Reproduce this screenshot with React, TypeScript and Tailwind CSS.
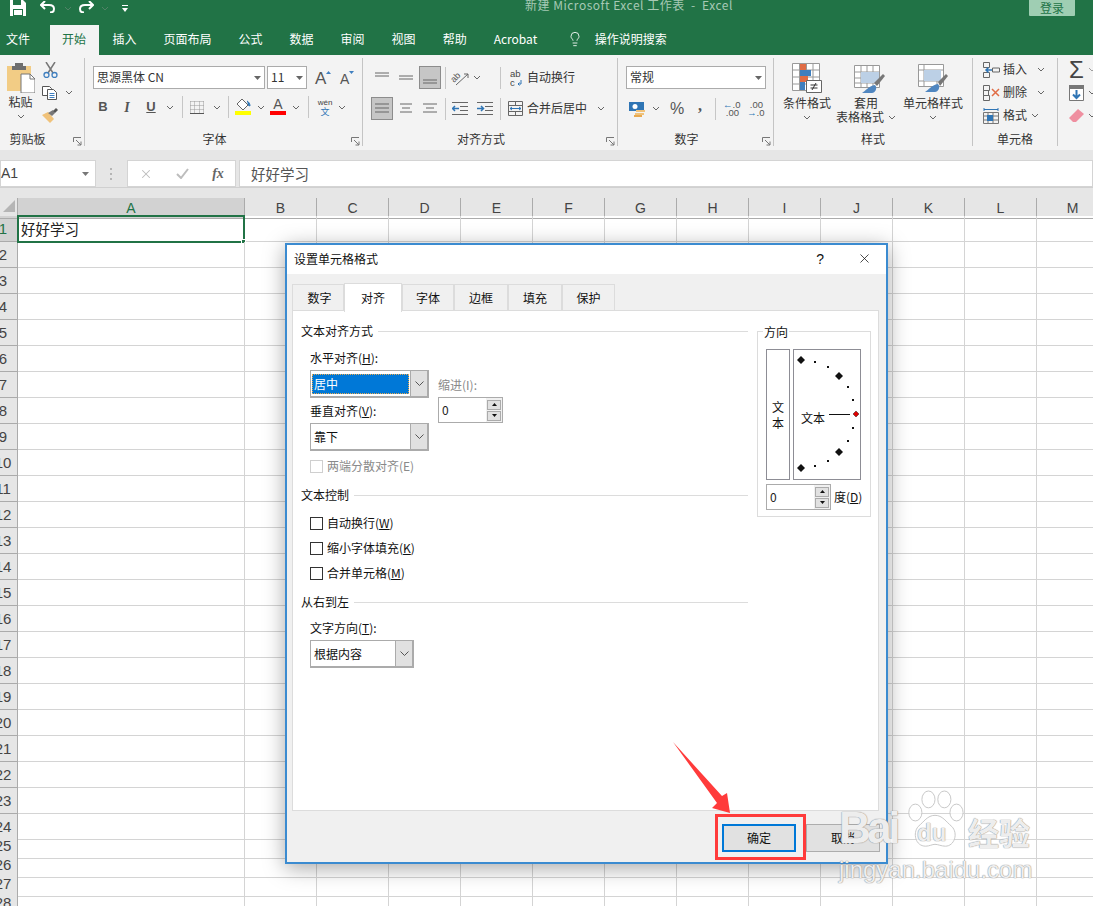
import { Lightbulb, X } from "lucide-react";
import type { ReactNode } from "react";

const COLS = ["B", "C", "D", "E", "F", "G", "H", "I", "J", "K", "L", "M"];
const ROWS = Array.from({ length: 28 }, (_, i) => i + 1);

function Chev({ className = "" }: { className?: string }) {
  return (
    <svg width="8" height="5" viewBox="0 0 8 5" className={`shrink-0 ${className}`}>
      <path d="M1 1l3 3 3-3" fill="none" stroke="#666" strokeWidth="1" />
    </svg>
  );
}

function Launcher() {
  return (
    <svg width="9" height="9" viewBox="0 0 9 9">
      <path d="M.5 5V.5H8M3 3l5 5M8 4.500V8H4.500" fill="none" stroke="#777" strokeWidth="1" />
    </svg>
  );
}

function Sep({ className = "" }: { className?: string }) {
  return <div className={`h-[22px] w-px shrink-0 bg-[#c6c6c6] ${className}`} />;
}

function Group({ w, label, launcher, children }: { w: string; label: string; launcher?: string; children: ReactNode }) {
  return (
    <div className={`flex h-[88px] shrink-0 flex-col border-r border-[#c4c4c4] ${w}`}>
      <div className="h-[73px]">{children}</div>
      <div className="flex h-[15px] items-center text-[12px] leading-[15px] text-[#333]">
        <span className="flex-1 text-center">{label}</span>
        {launcher && (
          <span className={`flex justify-end pr-[2px] pt-[5px] ${launcher}`}>
            <Launcher />
          </span>
        )}
      </div>
    </div>
  );
}

function Lines({ rows }: { rows: [number, number][] }) {
  return (
    <svg width="16" height="14" viewBox="0 0 16 14">
      {rows.map(([x, y], i) => (
        <path key={i} d={`M${x} ${y}h${16 - 2 * x}`} stroke="#666" strokeWidth="1" />
      ))}
    </svg>
  );
}

function AlignBox({ selected, children }: { selected?: boolean; children: ReactNode }) {
  return (
    <div className="flex h-[23px] w-[24px] items-center justify-center">
      <div className={`flex h-[23px] w-[22px] items-center justify-center ${selected ? "border border-[#8c8c8c] bg-[#c6c6c6]" : ""}`}>{children}</div>
    </div>
  );
}

function Combo({ w, text }: { w: string; text: string }) {
  return (
    <div className={`flex h-[23px] items-center justify-between border border-[#ababab] bg-white pl-[3px] pr-[3px] text-[12px] text-[#333] ${w}`}>
      <span className="-mt-[2px]">{text}</span>
      <svg width="7" height="4" viewBox="0 0 7 4"><path d="M0 0h7L3.500 4z" fill="#666" /></svg>
    </div>
  );
}

function Ribbon() {
  return (
    <div className="flex h-[95px] bg-[#f3f3f3] pt-[3px]">
      <Group w="w-[85px]" label="剪贴板" launcher="w-[29px]">
        <div className="flex">
          <div className="flex w-[41px] flex-col items-center pt-[5px]">
            <svg width="28" height="30" viewBox="0 0 28 30" className="ml-[1px]">
              <path d="M0 3h24v25H0z" fill="#f2cc85" />
              <path d="M8 3V0h8v3h3v4H5V3z" fill="#6e6e6e" />
              <path d="M14 11h9l5 5v14H14z" fill="#fff" stroke="#777" />
              <path d="M23 11v5h5" fill="none" stroke="#777" />
            </svg>
            <span className="mt-[2px] text-[12px] leading-[14px] text-[#333]">粘贴</span>
            <Chev className="mt-[5px]" />
          </div>
          <div className="flex flex-col">
            <div className="flex h-[23px] items-center pl-[2px]">
              <svg width="15" height="16" viewBox="0 0 15 16">
                <path d="M3 0l7 11M12 0L5 11" stroke="#777" strokeWidth="1.500" fill="none" />
                <circle cx="3.500" cy="13" r="2.500" fill="none" stroke="#3f7fbf" strokeWidth="1.300" />
                <circle cx="11.500" cy="13" r="2.500" fill="none" stroke="#3f7fbf" strokeWidth="1.300" />
              </svg>
            </div>
            <div className="flex h-[23px] items-center">
              <svg width="16" height="14" viewBox="0 0 16 14" className="ml-[1px]">
                <path d="M.5.500h7l2 2v7H.5z" fill="#fff" stroke="#555" />
                <path d="M5.500 3.500h6l3 3v7h-9z" fill="#fff" stroke="#555" />
                <path d="M7.500 7.500h5M7.500 9.500h5M7.500 11.500h5" stroke="#3f7fbf" />
              </svg>
              <Chev className="ml-[7px]" />
            </div>
            <div className="flex h-[23px] items-center pl-[1px]">
              <svg width="16" height="15" viewBox="0 0 16 15">
                <path d="M0 7l6-3 6 7-4 4z" fill="#f0c27a" />
                <path d="M6 5l5-3 2 3-3 3z" fill="#777" />
                <path d="M11 3l3-3 2 2-3 3z" fill="#555" />
              </svg>
            </div>
          </div>
        </div>
      </Group>

      <Group w="w-[278px]" label="字体" launcher="w-[18px]">
        <div className="flex items-center pl-[8px] pt-[8px]">
          <Combo w="w-[172px]" text="思源黑体 CN" />
          <Combo w="ml-[2px] w-[40px]" text="11" />
          <div className="ml-[8px] flex h-[23px] w-[16px] items-end font-['Liberation_Sans',sans-serif] text-[17px] leading-[20px] text-[#555]">
            A<svg width="5" height="3" viewBox="0 0 5 3" className="mb-[15px] shrink-0"><path d="M0 3h5L2.500 0z" fill="#3f7fbf" /></svg>
          </div>
          <div className="ml-[9px] flex h-[23px] w-[15px] items-end font-['Liberation_Sans',sans-serif] text-[14px] leading-[19px] text-[#555]">
            A<svg width="5" height="3" viewBox="0 0 5 3" className="mb-[15px] shrink-0"><path d="M0 0h5L2.500 3z" fill="#3f7fbf" /></svg>
          </div>
        </div>
        <div className="mt-[6px] flex h-[24px] items-center pl-[6px] text-[#555]">
          <span className="w-[24px] text-center font-['Liberation_Sans',sans-serif] text-[13px] font-bold">B</span>
          <span className="w-[24px] text-center font-['Liberation_Serif',serif] text-[14px] font-bold italic">I</span>
          <span className="w-[24px] text-center font-['Liberation_Sans',sans-serif] text-[13px] font-bold underline">U</span>
          <div className="flex w-[14px] justify-center"><Chev /></div>
          <Sep className="ml-[5px]" />
          <div className="flex w-[27px] justify-center">
            <svg width="14" height="13" viewBox="0 0 14 13">
              <path d="M.5.500h13M.5 4.500h13M.5 8.500h13M.5.500v12M4.500.500v12M9.500.500v12M13.500.500v12" stroke="#999" strokeDasharray="1 1" fill="none" />
              <path d="M0 12.500h14" stroke="#555" />
            </svg>
          </div>
          <div className="flex w-[14px] justify-center"><Chev /></div>
          <Sep className="ml-[4px]" />
          <div className="ml-[6px] flex w-[16px] flex-col items-center">
            <svg width="16" height="11" viewBox="0 0 16 11">
              <path d="M7 0l6 6-5 5-6-6z" fill="#fff" stroke="#666" />
              <path d="M12 2c2 1 3 3 3 5l-2-1" fill="#2f75b5" stroke="#2f75b5" />
            </svg>
            <div className="mt-[1px] h-[4px] w-[16px] bg-[#ffff00]" />
          </div>
          <div className="ml-[6px] flex w-[8px] justify-center"><Chev /></div>
          <div className="ml-[5px] flex w-[16px] flex-col items-center">
            <span className="h-[11px] text-center font-['Liberation_Sans',sans-serif] text-[14px] leading-[11px] text-[#555]">A</span>
            <div className="mt-[1px] h-[4px] w-[16px] bg-[#ff0000]" />
          </div>
          <div className="ml-[6px] flex w-[8px] justify-center"><Chev /></div>
          <Sep className="ml-[8px]" />
          <div className="ml-[8px] flex w-[16px] flex-col items-center leading-none">
            <span className="font-['Liberation_Sans',sans-serif] text-[8px] leading-[9px] text-[#444]">wén</span>
            <span className="text-[9px] leading-[9px] text-[#2f75b5]">文</span>
          </div>
          <div className="ml-[5px] flex w-[8px] justify-center"><Chev /></div>
        </div>
      </Group>

      <Group w="w-[255px]" label="对齐方式" launcher="w-[18px]">
        <div className="mt-[8px] flex h-[23px] items-center pl-[7px]">
          <AlignBox><Lines rows={[[1, 2], [1, 5]]} /></AlignBox>
          <AlignBox><Lines rows={[[1, 5], [1, 8]]} /></AlignBox>
          <AlignBox selected><Lines rows={[[1, 9], [1, 12]]} /></AlignBox>
          <Sep className="ml-[3px]" />
          <div className="flex w-[27px] justify-center">
            <svg width="18" height="16" viewBox="0 0 18 16">
              <text x="0" y="10" fontSize="9" fill="#555" fontFamily="Liberation Sans" transform="rotate(-45 5 8)">ab</text>
              <path d="M5 15l12-11M17 4h-4M17 4v4" stroke="#666" fill="none" />
            </svg>
          </div>
          <Chev />
          <Sep className="ml-[19px]" />
          <svg width="12" height="18" viewBox="0 0 12 18" className="ml-[9px]">
            <text x="0" y="8" fontSize="9.500" fill="#444" fontFamily="Liberation Sans">ab</text>
            <text x="0" y="17" fontSize="9.500" fill="#444" fontFamily="Liberation Sans">c</text>
            <path d="M11 11v4H8M8 15l1.500-1.500M8 15l1.500 1.500" stroke="#2f75b5" fill="none" />
          </svg>
          <span className="-mt-[2px] ml-[5px] text-[12px] text-[#333]">自动换行</span>
        </div>
        <div className="mt-[8px] flex h-[23px] items-center pl-[7px]">
          <AlignBox selected><Lines rows={[[1, 2], [1, 6], [1, 10]]} /></AlignBox>
          <AlignBox><Lines rows={[[2, 2], [4, 6], [2, 10]]} /></AlignBox>
          <AlignBox><Lines rows={[[1, 2], [4, 6], [1, 10]]} /></AlignBox>
          <Sep className="ml-[3px]" />
          <div className="flex w-[27px] justify-center">
            <svg width="16" height="13" viewBox="0 0 16 13">
              <path d="M0 .500h16M8 4.500h8M8 8.500h8M0 12.500h16" stroke="#666" />
              <path d="M7 6.500H1M3 4L.5 6.500 3 9" stroke="#2f75b5" strokeWidth="1.500" fill="none" />
            </svg>
          </div>
          <div className="flex w-[24px] justify-center">
            <svg width="16" height="13" viewBox="0 0 16 13">
              <path d="M0 .500h16M8 4.500h8M8 8.500h8M0 12.500h16" stroke="#666" />
              <path d="M0 6.500h6M4 4l2.500 2.500L4 9" stroke="#2f75b5" strokeWidth="1.500" fill="none" />
            </svg>
          </div>
          <Sep className="ml-[3px]" />
          <svg width="15" height="15" viewBox="0 0 15 15" className="ml-[7px]">
            <path d="M.5.500h14v14H.5zM.5 4.500h14M.5 10.500h14M7.500.500v4M7.500 10.500v4" stroke="#666" fill="none" />
            <path d="M2 7.500h11M2 7.500l2-1.500M2 7.500l2 1.500M13 7.500l-2-1.500M13 7.500l-2 1.500" stroke="#2f75b5" fill="none" />
          </svg>
          <span className="-mt-[2px] ml-[4px] text-[12px] text-[#333]">合并后居中</span>
          <Chev className="ml-[10px]" />
        </div>
      </Group>

      <Group w="w-[156px]" label="数字" launcher="w-[18px]">
        <div className="ml-[8px] mt-[8px]">
          <Combo w="w-[140px]" text="常规" />
        </div>
        <div className="mt-[8px] flex h-[23px] items-center pl-[11px] text-[#555]">
          <svg width="16" height="16" viewBox="0 0 16 16">
            <path d="M0 1h15v9H0z" fill="#2f75b5" />
            <circle cx="6" cy="5.500" r="2.500" fill="#fff" />
            <path d="M7 9h9v2H7zM6 12h9v2H6z" fill="#f0c27a" />
            <path d="M5 14h8v2H5z" fill="#e8a94f" />
          </svg>
          <Chev className="ml-[7px]" />
          <span className="ml-[10px] w-[14px] text-center font-['Liberation_Sans',sans-serif] text-[16px] leading-none">%</span>
          <span className="-mt-[5px] ml-[12px] w-[8px] text-center font-['Liberation_Serif',serif] text-[16px] font-bold leading-none">,</span>
          <Sep className="ml-[11px]" />
          <div className="ml-[7px] flex w-[16px] flex-col font-['Liberation_Sans',sans-serif] text-[9.500px] leading-[8px]">
            <span className="text-right"><span className="text-[#2f75b5]">←</span>.0</span>
            <span className="text-right">.00</span>
          </div>
          <div className="ml-[8px] flex w-[16px] flex-col font-['Liberation_Sans',sans-serif] text-[9.500px] leading-[8px]">
            <span className="text-right">.00</span>
            <span className="text-right"><span className="text-[#2f75b5]">→</span>.0</span>
          </div>
        </div>
      </Group>

      <Group w="w-[199px]" label="样式">
        <div className="flex pt-[5px] text-[12px] leading-[14px] text-[#333]">
          <div className="ml-[8px] flex w-[50px] flex-col items-center">
            <svg width="30" height="30" viewBox="0 0 30 30">
              <path d="M.5.500h27v27H.5zM.5 7h27M.5 14h27M.5 21h27M7.500.500v27M14.500.500v27M21 .500v27" fill="#fff" stroke="#999" />
              <path d="M8 1h6v6H8z" fill="#e06c45" />
              <path d="M8 7h11v6H8z" fill="#3f7fbf" />
              <path d="M8 13h8v6H8z" fill="#e06c45" />
              <path d="M8 19h5v8H8z" fill="#3f7fbf" />
              <path d="M14.500 17.500h15v12h-15z" fill="#fff" stroke="#666" />
              <path d="M18.500 22h7M18.500 25h7M24 20l-4 7" stroke="#333" fill="none" />
            </svg>
            <span className="mt-[3px]">条件格式</span>
            <Chev className="mt-[5px]" />
          </div>
          <div className="ml-[3px] flex w-[62px] flex-col items-center">
            <svg width="32" height="30" viewBox="0 0 32 30" className="ml-[8px]">
              <path d="M.5 2.500h25v22H.5zM.5 9h25M.5 15h25M.5 20h25M7 2.500v22M13 2.500v22M19 2.500v22" fill="#fff" stroke="#999" />
              <path d="M7 9h18v11H7z" fill="#bcd0e6" />
              <path d="M20 20l9-9 2 2-8 10z" fill="#777" />
              <path d="M8 30c4-2 6-7 13-8 3 3 0 8-3 8z" fill="#4f86c0" />
            </svg>
            <span className="mt-[3px]">套用</span>
            <div className="flex items-center whitespace-nowrap">
              <span>表格格式</span>
              <Chev className="ml-[4px]" />
            </div>
          </div>
          <div className="flex w-[72px] flex-col items-center">
            <svg width="31" height="30" viewBox="0 0 31 30">
              <path d="M.5 1.500h25v22H.5zM.5 7h25M.5 18h25M6 1.500v22M19 18v5" fill="#fff" stroke="#999" />
              <path d="M6 7h17v11H6z" fill="#bcd0e6" />
              <path d="M20 19l8-8 2 2-8 10z" fill="#777" />
              <path d="M7 29c4-2 6-7 13-8 3 3 0 8-3 8z" fill="#4f86c0" />
            </svg>
            <span className="mt-[3px] whitespace-nowrap">单元格样式</span>
            <Chev className="mt-[5px]" />
          </div>
        </div>
      </Group>

      <Group w="w-[85px]" label="单元格">
        <div className="flex flex-col pl-[10px] text-[12px] text-[#333]">
          <div className="flex h-[23px] items-center">
            <svg width="17" height="16" viewBox="0 0 17 16" className="mr-[3px]">
              <path d="M.5.500h6v5h-6zM.5 10.500h6v5h-6zM9.500 6h7v4h-7z" fill="none" stroke="#666" />
              <path d="M9 8H3M5.500 5.500L3 8l2.500 2.500" stroke="#2f75b5" strokeWidth="1.500" fill="none" />
            </svg>
            <span className="-mt-[1px]">插入</span>
            <Chev className="ml-[10px]" />
          </div>
          <div className="flex h-[23px] items-center">
            <svg width="17" height="16" viewBox="0 0 17 16" className="mr-[3px]">
              <path d="M.5.500h6v5h-6zM.5 10.500h6v5h-6zM.5 5.500h5v5h-5z" fill="none" stroke="#666" />
              <path d="M9 4l7 7M16 4l-7 7" stroke="#e06c45" strokeWidth="1.500" />
            </svg>
            <span className="-mt-[1px]">删除</span>
            <Chev className="ml-[10px]" />
          </div>
          <div className="flex h-[23px] items-center">
            <svg width="17" height="16" viewBox="0 0 17 16" className="mr-[3px]">
              <path d="M.5 4.500h15v11H.5zM.5 8h15M.5 12h15M5 4.500v11M10 4.500v11" fill="none" stroke="#777" />
              <path d="M4 7h6v6H4z" fill="#2f75b5" />
              <path d="M1 1.500h14M1 0v3M15 0v3" stroke="#2f75b5" fill="none" />
            </svg>
            <span className="-mt-[1px]">格式</span>
            <Chev className="ml-[4px]" />
          </div>
        </div>
      </Group>

      <div className="flex flex-col pl-[11px]">
        <div className="flex h-[23px] items-center">
          <span className="w-[15px] font-['Liberation_Sans',sans-serif] text-[24px] leading-none text-[#444]">Σ</span>
          <Chev className="ml-[4px] opacity-60" />
        </div>
        <div className="flex h-[23px] items-center">
          <svg width="15" height="16" viewBox="0 0 15 16" className="shrink-0">
            <path d="M.5.500h14v15H.5z" fill="#fff" stroke="#777" />
            <path d="M0 0h15v4H0z" fill="#777" />
            <path d="M7.500 5v8M4 9.500L7.500 13 11 9.500" stroke="#2f75b5" strokeWidth="2" fill="none" />
          </svg>
          <Chev className="ml-[4px]" />
        </div>
        <div className="flex h-[23px] items-center">
          <svg width="15" height="13" viewBox="0 0 15 13" className="shrink-0">
            <path d="M0 9l9-9 6 5-8 8H4z" fill="#ef8fa0" />
          </svg>
          <Chev className="ml-[4px]" />
        </div>
      </div>
    </div>
  );
}

function TopBar() {
  return (
    <div className="h-[55px] bg-[#217346]">
      <div className="flex h-[25px] items-start">
        <svg width="16" height="16" viewBox="0 0 16 16" className="ml-[10px]">
          <path d="M0 0h13l3 3v13H0z" fill="#fff" />
          <path d="M3 0h8v5H3zM3 9h10v7H3z" fill="#217346" />
          <path d="M4 10h8v5H4z" fill="#fff" />
        </svg>
        <svg width="16" height="12" viewBox="0 0 16 12" className="ml-[14px] mt-[1px]">
          <path d="M2 4h7c3 0 5 1.500 5 4s-2 3.500-4 3.500" fill="none" stroke="#fff" strokeWidth="2" />
          <path d="M5 0L1 4l4 4" fill="none" stroke="#fff" strokeWidth="2" />
        </svg>
        <Chev className="ml-[8px] mt-[6px] opacity-40 invert" />
        <svg width="16" height="12" viewBox="0 0 16 12" className="ml-[6px] mt-[1px]">
          <path d="M14 4H7C4 4 2 5.500 2 8s2 3.500 4 3.500" fill="none" stroke="#fff" strokeWidth="2" />
          <path d="M11 0l4 4-4 4" fill="none" stroke="#fff" strokeWidth="2" />
        </svg>
        <Chev className="ml-[7px] mt-[6px] opacity-40 invert" />
        <svg width="6" height="7" viewBox="0 0 6 7" className="ml-[13px] mt-[5px]">
          <path d="M0 0h6v1H0zM0 3h6L3 7z" fill="#fff" />
        </svg>
        <span className="-mt-[3px] ml-[397px] whitespace-nowrap text-[12px] leading-[15px] tracking-[0.5px] text-[#a6c9b5]">新建 Microsoft Excel 工作表 &nbsp;-&nbsp; Excel</span>
        <div className="ml-auto mr-[18px] flex h-[16px] w-[46px] items-center justify-center rounded-b-[1px] bg-[#9fceb3] text-[12px] text-[#217346]">登录</div>
      </div>
      <div className="flex h-[30px] items-center text-[12px] text-white">
        <span className="flex h-full items-center pb-[2px] pl-[6px] pr-[20px]">文件</span>
        <span className="flex h-full items-center bg-[#f3f3f3] pb-[2px] pl-[12px] pr-[13px] text-[#217346]">开始</span>
        {["插入", "页面布局", "公式", "数据", "审阅", "视图", "帮助", "Acrobat"].map((t) => (
          <span key={t} className="flex h-full items-center px-[13.500px] pb-[2px]">{t}</span>
        ))}
        <Lightbulb size={16} strokeWidth={1.300} className="ml-[16px] -mt-[2px]" />
        <span className="ml-[12px] pb-[2px]">操作说明搜索</span>
      </div>
    </div>
  );
}

function FormulaBar() {
  return (
    <div className="h-[48px] bg-[#e6e6e6] pt-[10px]">
      <div className="flex h-[28px] items-center border-b border-[#d0d0d0]">
        <div className="flex h-[27px] w-[96px] items-center justify-between border border-[#d4d4d4] bg-white pr-[6px] font-['Liberation_Sans',sans-serif] text-[14px] text-[#444]">
          <span>A1</span>
          <svg width="7" height="4" viewBox="0 0 7 4"><path d="M0 0h7L3.500 4z" fill="#777" /></svg>
        </div>
        <div className="ml-[14px] flex w-[2px] flex-col gap-[3px]">
          <div className="h-[2px] w-[2px] bg-[#b5b5b5]" />
          <div className="h-[2px] w-[2px] bg-[#b5b5b5]" />
          <div className="h-[2px] w-[2px] bg-[#b5b5b5]" />
        </div>
        <div className="ml-[15px] flex h-[27px] w-[109px] items-center border border-[#d4d4d4] bg-white">
          <span className="flex w-[36px] justify-center">
            <X size={14} strokeWidth={1.800} className="text-[#bdbdbd]" />
          </span>
          <span className="flex w-[37px] justify-center">
            <svg width="13" height="11" viewBox="0 0 13 11"><path d="M1 6l4 4 7-9" fill="none" stroke="#bdbdbd" strokeWidth="2" /></svg>
          </span>
          <span className="w-[34px] text-center font-['Liberation_Serif',serif] text-[14px] font-bold italic text-[#666]">fx</span>
        </div>
        <div className="ml-[3px] flex h-[27px] flex-1 items-center border border-[#d4d4d4] bg-white pl-[11px] text-[14.500px] text-[#555]">好好学习</div>
      </div>
      <div className="h-[10px]" />
    </div>
  );
}

function Sheet() {
  return (
    <div className="bg-white">
      <div className="grid h-[18px] grid-cols-[18px_227px_repeat(12,72px)] bg-[#e6e6e6] font-['Liberation_Sans',sans-serif] text-[14px] leading-[20px] text-[#444]">
        <div className="relative border-b border-r border-[#ababab]">
          <svg width="12" height="12" viewBox="0 0 12 12" className="ml-[3px] mt-[2px]"><path d="M12 0v12H0z" fill="#b5b5b5" /></svg>
        </div>
        <div className="border-b border-r border-[#ababab] bg-[#d2d2d2] text-center text-[#217346]">A</div>
        {COLS.map((c) => (
          <div key={c} className="border-b border-r border-[#ababab] text-center">{c}</div>
        ))}
      </div>
      {ROWS.map((r) => (
        <div
          key={r}
          className={`grid grid-cols-[18px_227px_repeat(12,72px)] ${r <= 23 ? "h-[26px]" : r <= 27 ? "h-[19px]" : "h-[16px]"}`}
        >
          <div className={`flex items-center border-b border-r border-[#ababab] pt-[2px] font-['Liberation_Sans',sans-serif] text-[15px] text-[#444] ${r === 1 ? "bg-[#d2d2d2] text-[#217346]" : "bg-[#e6e6e6]"}`}>
            <span className="flex w-[6px] justify-center whitespace-nowrap">{r}</span>
          </div>
          <div className="relative border-b border-r border-[#d4d4d4]">
            {r === 1 && (
              <>
                <div className="absolute -left-px -top-px h-[28px] w-[228px] border-2 border-[#217346]" />
                <div className="absolute -bottom-[3px] -right-[2px] h-[5px] w-[5px] border border-white bg-[#217346]" />
                <span className="relative flex h-full items-center pl-[3px] text-[14.500px] text-[#222]">好好学习</span>
              </>
            )}
          </div>
          {COLS.map((c) => (
            <div key={c} className="border-b border-r border-[#d4d4d4]" />
          ))}
        </div>
      ))}
    </div>
  );
}

function Heading({ children }: { children: ReactNode }) {
  return (
    <div className="flex h-[16px] items-center gap-[5px] text-[12px] leading-[16px] text-[#111]">
      <span className="whitespace-nowrap">{children}</span>
      <div className="h-px flex-1 bg-[#dcdcdc]" />
    </div>
  );
}

function Select({ w, text, active }: { w: string; text: string; active?: boolean }) {
  return (
    <div className={`flex h-[28px] items-stretch border-2 border-l border-t border-[#ababab] bg-white ${w}`}>
      <div className="flex flex-1 items-center p-[1px]">
        {active ? (
          <span className="flex h-[20px] w-full items-center border border-dotted border-[#e8a94f] bg-[#0078d7] pl-px text-white">{text}</span>
        ) : (
          <span className="pl-[2px]">{text}</span>
        )}
      </div>
      <div className="flex w-[17px] items-center justify-center border-l border-[#ababab] bg-[#e1e1e1]">
        <svg width="9" height="5" viewBox="0 0 9 5"><path d="M.5.500l4 4 4-4" fill="none" stroke="#555" /></svg>
      </div>
    </div>
  );
}

function Spin() {
  return (
    <div className="flex h-[26px] w-[65px] items-center border border-[#ababab] bg-white">
      <span className="flex-1 pl-[3px] text-[#222]">0</span>
      <div className="flex h-full w-[16px] flex-col justify-center gap-px bg-[#f0f0f0] px-px">
        <div className="flex h-[10px] items-center justify-center border border-[#ababab] bg-[#e1e1e1]">
          <svg width="5" height="3" viewBox="0 0 5 3"><path d="M0 3h5L2.500 0z" fill="#111" /></svg>
        </div>
        <div className="flex h-[10px] items-center justify-center border border-[#ababab] bg-[#e1e1e1]">
          <svg width="5" height="3" viewBox="0 0 5 3"><path d="M0 0h5L2.500 3z" fill="#111" /></svg>
        </div>
      </div>
    </div>
  );
}

function Check({ label, disabled, className = "" }: { label: ReactNode; disabled?: boolean; className?: string }) {
  return (
    <div className={`ml-[9px] flex h-[16px] items-center ${disabled ? "text-[#8a8a8a]" : ""} ${className}`}>
      <div className={`h-[13px] w-[13px] border bg-white ${disabled ? "border-[#cfcfcf]" : "border-[#333]"}`} />
      <span className="ml-[4px] whitespace-nowrap">{label}</span>
    </div>
  );
}

const DIAMONDS: [number, number][] = [[8, 11], [46, 27], [46, 103], [8, 119]];
const DOTS: [number, number][] = [[22, 13], [35, 18], [55, 38], [60, 51], [60, 79], [55, 92], [35, 112], [22, 117]];

function Dial() {
  return (
    <div className="h-[131px] w-[68px] border border-[#8d8d95]">
      <svg width="66" height="129" viewBox="1 1 66 129">
        {DIAMONDS.map(([x, y]) => (
          <path key={`${x}-${y}`} d={`M${x} ${y - 4}l4 4-4 4-4-4z`} fill="#111" />
        ))}
        {DOTS.map(([x, y]) => (
          <rect key={`${x}-${y}`} x={x - 1} y={y - 1} width="2" height="2" fill="#111" />
        ))}
        <path d="M36 65.500h21" stroke="#111" />
        <path d="M63 62l3 3-3 3-3-3z" fill="#e00000" stroke="#222" strokeWidth=".5" />
        <text x="8" y="74" fontSize="12" fill="#111">文本</text>
      </svg>
    </div>
  );
}

function Dialog() {
  const tabs = [
    { t: "数字", w: "w-[52px] pl-[3px]" },
    { t: "对齐", w: "w-[58px]", on: true },
    { t: "字体", w: "w-[52px]" },
    { t: "边框", w: "w-[54px]" },
    { t: "填充", w: "w-[54px]" },
    { t: "保护", w: "w-[53px]" },
  ];
  return (
    <div className="absolute left-[285px] top-[243px] flex h-[621px] w-[603px] flex-col border-2 border-[#3b8bd0] bg-[#f0f0f0] text-[12px] leading-[16px] text-[#111] shadow-[0_4px_20px_rgba(0,0,0,0.35)]">
      <div className="flex h-[29px] items-center bg-white pb-[2px] pl-[7px]">
        <span>设置单元格格式</span>
        <span className="ml-auto font-['Liberation_Sans',sans-serif] text-[14px]">?</span>
        <X size={15} strokeWidth={1.200} className="ml-[33px] mr-[14px]" />
      </div>
      <div className="flex items-end pl-[5px] pt-[9px]">
        {tabs.map(({ t, w, on }) => (
          <div
            key={t}
            className={`flex items-center justify-center border border-[#dcdcdc] ${w} ${on ? "relative z-10 -mb-px h-[29px] border-b-0 bg-white" : "h-[27px] border-b-0"}`}
          >
            {t}
          </div>
        ))}
      </div>
      <div className="mx-[5px] -mt-px flex h-[501px] w-[587px] border border-[#dcdcdc] bg-white pl-[8px]">
        <div className="w-[447px] pt-[12px]">
          <Heading>文本对齐方式</Heading>
          <div className="ml-[9px] flex">
            <div className="w-[119px]">
              <div className="mt-[11px] whitespace-nowrap">水平对齐(<u>H</u>):</div>
              <div className="mt-[4px]"><Select w="w-[119px]" text="居中" active /></div>
              <div className="mt-[5px] whitespace-nowrap">垂直对齐(<u>V</u>):</div>
              <div className="mt-[4px]"><Select w="w-[119px]" text="靠下" /></div>
            </div>
            <div className="ml-[9px] pt-[38px]">
              <div className="text-[#8a8a8a]">缩进(I):</div>
              <div className="mt-[4px]"><Spin /></div>
            </div>
          </div>
          <Check disabled className="mt-[7px]" label="两端分散对齐(E)" />
          <div className="mt-[13px]"><Heading>文本控制</Heading></div>
          <Check className="mt-[12px]" label={<>自动换行(<u>W</u>)</>} />
          <Check className="mt-[9px]" label={<>缩小字体填充(<u>K</u>)</>} />
          <Check className="mt-[9px]" label={<>合并单元格(<u>M</u>)</>} />
          <div className="mt-[13px]"><Heading>从右到左</Heading></div>
          <div className="ml-[9px] mt-[10px]">文字方向(<u>T</u>):</div>
          <div className="ml-[9px] mt-[4px]"><Select w="w-[104px]" text="根据内容" /></div>
        </div>
        <div className="relative ml-[9px] mt-[20px] h-[186px] w-[114px] border border-[#dcdcdc] pl-[8px] pt-[17px]">
          <span className="absolute -top-[8px] left-[5px] bg-white px-px">方向</span>
          <div className="flex gap-[3px]">
            <div className="flex h-[131px] w-[24px] flex-col items-center justify-center border border-[#8d8d95]">
              <span>文</span>
              <span>本</span>
            </div>
            <Dial />
          </div>
          <div className="mt-[4px] flex items-center">
            <Spin />
            <span className="ml-[3px] whitespace-nowrap">度(<u>D</u>)</span>
          </div>
        </div>
      </div>
      <div className="flex justify-end gap-[10px] pr-[6px] pt-[13px]">
        <div className="flex h-[28px] w-[74px] items-center justify-center border-2 border-[#0078d7] bg-[#e1e1e1]">确定</div>
        <div className="flex h-[28px] w-[74px] items-center justify-center border border-[#adadad] bg-[#e1e1e1]">取消</div>
      </div>
    </div>
  );
}

function Watermark() {
  const outline = "[text-shadow:0_0_1px_#8a8a8a,0_0_1px_#8a8a8a]";
  return (
    <div className="absolute left-[839px] top-[788px] w-[200px] text-white/85">
      <div className="flex h-[62px] items-end">
        <span className={`w-[54px] font-['Liberation_Sans',sans-serif] text-[44px] font-bold leading-[44px] tracking-[-3.500px] ${outline}`}>Bai</span>
        <div className="relative ml-[13px] h-[60px] w-[58px]">
          <svg width="58" height="60" viewBox="0 0 62 64" fill="rgba(255,255,255,.75)" stroke="#c4c4c4">
            <ellipse cx="10" cy="24" rx="7" ry="9" />
            <ellipse cx="24" cy="10" rx="7" ry="9" />
            <ellipse cx="41" cy="10" rx="7" ry="9" />
            <ellipse cx="54" cy="24" rx="7" ry="9" />
            <path d="M31 27c-8 0-12 7-18 12-6 7-3 21 8 21 4 0 7-2 10-2s7 2 11 2c10 0 14-14 7-21-6-5-10-12-18-12z" />
          </svg>
          <span className={`absolute left-[11px] top-[30px] font-['Liberation_Sans',sans-serif] text-[24px] font-bold leading-[26px] text-white/85 ${outline}`}>du</span>
        </div>
        <span className={`ml-[4px] whitespace-nowrap pb-[0px] text-[31px] font-bold leading-[36px] ${outline}`}>经验</span>
      </div>
      <div className={`mt-[9px] whitespace-nowrap font-['Liberation_Sans',sans-serif] text-[24px] leading-[22px] ${outline}`}>jingyan.baidu.com</div>
    </div>
  );
}

export default function App() {
  return (
    <div className="relative h-[906px] w-[1093px] overflow-hidden bg-white font-['Noto_Sans_CJK_SC','Noto_Sans',sans-serif]">
      <TopBar />
      <Ribbon />
      <FormulaBar />
      <Sheet />
      <Dialog />
      <svg width="80" height="80" viewBox="0 0 80 80" className="absolute left-[665px] top-[738px]">
        <path d="M8 4l49 54 5-3 3 20-18-5 5-5z" fill="#ff3b3b" />
      </svg>
      <div className="absolute left-[715px] top-[814px] h-[46px] w-[91px] border-[3px] border-[#ff3b3b]" />
      <Watermark />
    </div>
  );
}
